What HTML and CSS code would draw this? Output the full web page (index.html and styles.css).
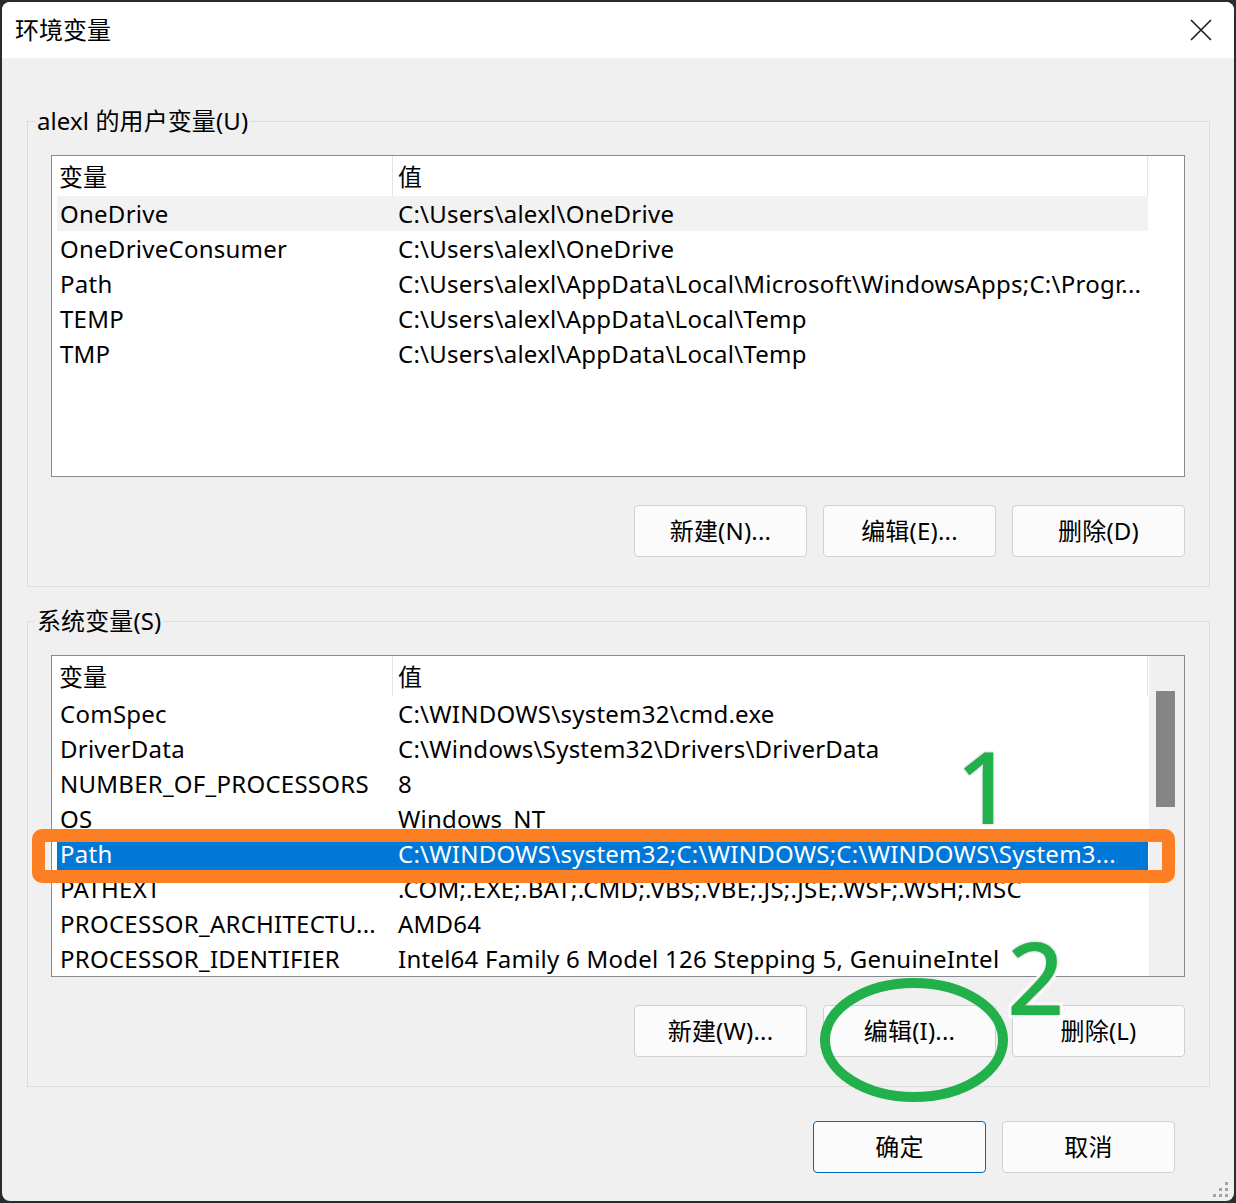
FILE: index.html
```html
<!DOCTYPE html>
<html lang="zh-CN">
<head>
<meta charset="utf-8">
<title>环境变量</title>
<link rel="stylesheet" href="styles.css">
</head>
<body>
<div class="window">
  <div class="titlebar">
    <div class="title">环境变量</div>
    <div class="close">
      <svg width="22" height="22" viewBox="0 0 22 22"><path d="M1 1 L21 21 M21 1 L1 21" stroke="#1b1b1b" stroke-width="1.6" fill="none"/></svg>
    </div>
  </div>
  <div class="content">
    <fieldset class="group group-user">
      <legend>alexl 的用户变量(U)</legend>
      <div class="group-inner">
        <div class="list">
          <div class="list-main">
            <div class="hdr"><div class="hc1">变量</div><div class="hc2">值</div></div>
            <div class="row hover"><div class="c1">OneDrive</div><div class="c2">C:\Users\alexl\OneDrive</div></div>
            <div class="row"><div class="c1">OneDriveConsumer</div><div class="c2">C:\Users\alexl\OneDrive</div></div>
            <div class="row"><div class="c1">Path</div><div class="c2">C:\Users\alexl\AppData\Local\Microsoft\WindowsApps;C:\Progr...</div></div>
            <div class="row"><div class="c1">TEMP</div><div class="c2">C:\Users\alexl\AppData\Local\Temp</div></div>
            <div class="row"><div class="c1">TMP</div><div class="c2">C:\Users\alexl\AppData\Local\Temp</div></div>
          </div>
          <div class="list-side"><div class="side-hdr"></div></div>
        </div>
        <div class="btns">
          <div class="btn">新建(N)...</div>
          <div class="btn">编辑(E)...</div>
          <div class="btn">删除(D)</div>
        </div>
      </div>
    </fieldset>

    <fieldset class="group group-sys">
      <legend>系统变量(S)</legend>
      <div class="group-inner">
        <div class="list">
          <div class="list-main">
            <div class="hdr"><div class="hc1">变量</div><div class="hc2">值</div></div>
            <div class="row"><div class="c1">ComSpec</div><div class="c2">C:\WINDOWS\system32\cmd.exe</div></div>
            <div class="row"><div class="c1">DriverData</div><div class="c2">C:\Windows\System32\Drivers\DriverData</div></div>
            <div class="row"><div class="c1">NUMBER_OF_PROCESSORS</div><div class="c2">8</div></div>
            <div class="row"><div class="c1">OS</div><div class="c2">Windows_NT</div></div>
            <div class="row selected"><div class="c1">Path</div><div class="c2">C:\WINDOWS\system32;C:\WINDOWS;C:\WINDOWS\System3...</div></div>
            <div class="row"><div class="c1">PATHEXT</div><div class="c2">.COM;.EXE;.BAT;.CMD;.VBS;.VBE;.JS;.JSE;.WSF;.WSH;.MSC</div></div>
            <div class="row"><div class="c1">PROCESSOR_ARCHITECTU...</div><div class="c2">AMD64</div></div>
            <div class="row"><div class="c1">PROCESSOR_IDENTIFIER</div><div class="c2">Intel64 Family 6 Model 126 Stepping 5, GenuineIntel</div></div>
          </div>
          <div class="list-side scroll"><div class="thumb"></div></div>
        </div>
        <div class="btns">
          <div class="btn">新建(W)...</div>
          <div class="btn">编辑(I)...</div>
          <div class="btn">删除(L)</div>
        </div>
      </div>
    </fieldset>

    <div class="footer">
      <div class="btn primary">确定</div>
      <div class="btn">取消</div>
    </div>
  </div>

  <svg class="grip" width="18" height="18" viewBox="0 0 18 18">
    <rect x="13" y="1" width="3" height="3" fill="#a3a3a3"/>
    <rect x="7" y="7" width="3" height="3" fill="#a3a3a3"/>
    <rect x="13" y="7" width="3" height="3" fill="#a3a3a3"/>
    <rect x="1" y="13" width="3" height="3" fill="#a3a3a3"/>
    <rect x="7" y="13" width="3" height="3" fill="#a3a3a3"/>
    <rect x="13" y="13" width="3" height="3" fill="#a3a3a3"/>
  </svg>

  <div class="mark-box"></div>
  <div class="mark-num num1">1</div>
  <div class="mark-num num2">2</div>
  <svg class="mark-ellipse" width="200" height="136" viewBox="0 0 200 136">
    <ellipse cx="97" cy="66" rx="89" ry="57" fill="none" stroke="#22b04b" stroke-width="10"/>
  </svg>
</div>
</body>
</html>
```

FILE: styles.css
```css
html, body {
  margin: 0;
  padding: 0;
}
body {
  background: #2b2a2e;
  width: 1236px;
  height: 1203px;
  overflow: hidden;
  font-family: "Noto Sans", "Noto Sans CJK SC", sans-serif;
  font-size: 24px;
  color: #000;
}
.window {
  position: relative;
  margin: 2px 0 0 2px;
  width: 1232px;
  height: 1199px;
  border-radius: 8px;
  overflow: hidden;
  background: #f0f0f0;
}
.titlebar {
  height: 56px;
  background: #fff;
  display: flex;
  align-items: center;
  justify-content: space-between;
}
.title {
  padding-left: 13px;
  font-size: 24px;
  line-height: 30px;
}
.close {
  width: 66px;
  height: 56px;
  display: flex;
  align-items: center;
  justify-content: center;
}
.content {
  display: flex;
  flex-direction: column;
  padding: 0 24px 0 25px;
}
.group {
  margin: 0;
  padding: 0;
  border: 1px solid #dcdcdc;
  min-width: 0;
}
.group-user { margin-top: 48px; }
.group-sys { margin-top: 19px; }
.group legend {
  margin-left: 7px;
  padding: 0 2px;
  line-height: 30px;
  font-size: 24px;
  letter-spacing: 0.1px;
}
.group-inner {
  padding: 19px 24px 29px 23px;
}
.list {
  height: 320px;
  border: 1px solid #858991;
  background: #fff;
  display: flex;
  overflow: hidden;
}
.list-main {
  width: 1091px;
  padding-left: 5px;
  flex: none;
}
.hdr {
  display: flex;
  height: 40px;
  line-height: 42px;
}
.hc1 {
  width: 333px;
  padding-left: 2px;
  border-right: 1px solid #e5e5e5;
  flex: none;
}
.hc2 {
  flex: 1;
  padding-left: 5px;
  border-right: 1px solid #e5e5e5;
}
.row {
  display: flex;
  height: 35px;
  line-height: 35px;
  white-space: nowrap;
  letter-spacing: 0.25px;
}
.row.hover { background: #f2f2f2; }
.row.selected { background: #0078d7; color: #fff; }
.c1 {
  width: 332px;
  padding-left: 3px;
  flex: none;
  overflow: hidden;
}
.c2 {
  flex: 1;
  padding-left: 6px;
  overflow: hidden;
}
.list-side {
  flex: 1;
}
.list-side.scroll {
  background: #f0f0f0;
  margin-left: 1px;
  padding-top: 35px;
}
.thumb {
  width: 19px;
  height: 116px;
  margin-left: 7px;
  background: #858585;
}
.btns {
  display: flex;
  justify-content: flex-end;
  gap: 16px;
  margin-top: 28px;
}
.btn {
  width: 171px;
  height: 50px;
  box-sizing: content-box;
  border: 1px solid #d0d0d0;
  border-radius: 4px;
  background: #fbfbfb;
  display: flex;
  align-items: center;
  justify-content: center;
  font-size: 24px;
  line-height: 30px;
  padding-bottom: 0;
  letter-spacing: 0.2px;
}
.btn.primary {
  border-color: #0067c0;
}
.footer {
  display: flex;
  justify-content: flex-end;
  gap: 16px;
  margin-top: 34px;
  padding-right: 35px;
}
.grip {
  position: absolute;
  right: 4px;
  bottom: 2px;
}
.mark-box {
  position: absolute;
  left: 30px;
  top: 827px;
  width: 1143px;
  height: 54px;
  box-sizing: border-box;
  border: 13px solid #fd7f23;
  border-radius: 10px;
}
.mark-num {
  position: absolute;
  font-family: "Noto Sans", sans-serif;
  font-size: 100px;
  line-height: 100px;
  font-weight: 500;
  color: #22b04b;
  -webkit-text-stroke: 6px #fff;
  paint-order: stroke fill;
  text-shadow: 0 0 3px rgba(0,0,0,0.25);
}
.num1 { left: 954px; top: 733px; }
.num2 { left: 1005px; top: 924px; }
.mark-ellipse {
  position: absolute;
  left: 815px;
  top: 972px;
}
```
